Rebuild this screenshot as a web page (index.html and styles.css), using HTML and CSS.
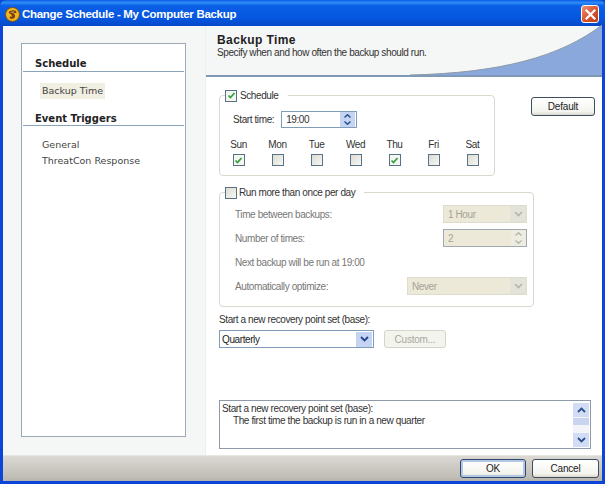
FILE: index.html
```html
<!DOCTYPE html>
<html lang="en">
<head>
<meta charset="utf-8">
<title>Change Schedule - My Computer Backup</title>
<link rel="stylesheet" href="styles.css">
</head>
<body>
<div class="window">
  <header class="titlebar">
    <svg class="app-icon" width="15" height="15" viewBox="0 0 15 15"><circle cx="7.5" cy="7.5" r="7" fill="#f2b61c" stroke="#7a4a10"/><path d="M3.5 5.5 C5 3 9 2.5 11 4 L11.5 6 L8 6 C9.5 7 10.5 8 10 10 C9 12 6 12.5 4.5 11 L5 9.5 L7.5 9.5 L6 7.5 Z" fill="#7a3f12"/><path d="M5.5 5 L9 4.6 L8.6 5.4 L6 5.6 Z" fill="#fbe08a"/></svg>
    <span class="title-text">Change Schedule - My Computer Backup</span>
    <span class="close-btn"><svg width="11" height="11" viewBox="0 0 11 11"><path d="M1.5 1.5 L9.5 9.5 M9.5 1.5 L1.5 9.5" stroke="#fff" stroke-width="2.2" stroke-linecap="square"/></svg></span>
  </header>
  <div class="body">
    <aside class="sidebar">
      <nav class="nav-panel">
        <h3 class="nav-head first">Schedule</h3>
        <div class="nav-list one"><span class="nav-item selected">Backup Time</span></div>
        <h3 class="nav-head second">Event Triggers</h3>
        <div class="nav-list"><span class="nav-item">General</span><span class="nav-item">ThreatCon Response</span></div>
      </nav>
    </aside>
    <main class="content">
      <div class="page-head">
        <svg class="swoosh" width="192" height="50" viewBox="0 0 192 50" preserveAspectRatio="none"><path d="M0 50 C90 48 150 32 192 0 L192 50 Z" fill="#8aa8dc"/><path d="M0 50 C90 48 150 32 192 0" fill="none" stroke="#8c9aa8" stroke-width="1"/></svg>
        <h1 class="page-title">Backup Time</h1>
        <p class="page-desc">Specify when and how often the backup should run.</p>
      </div>
      <div class="form">
        <div class="top-row">
          <fieldset class="group schedule">
            <legend class="legend"><span class="check on"><svg width="9" height="9" viewBox="0 0 9 9"><path d="M1.5 4.5 L3.5 6.5 L7.5 2" fill="none" stroke="#2f9e3f" stroke-width="1.7"/></svg></span>Schedule</legend>
            <div class="time-row">
              <span>Start time:</span>
              <div class="time-input"><span>19:00</span>
                <div class="spin"><span class="spin-btn"><svg width="7" height="4" viewBox="0 0 7 4"><path d="M.5 3.5 L3.5 .7 L6.5 3.5" fill="none" stroke="#28508c" stroke-width="1.4"/></svg></span><span class="spin-btn"><svg width="7" height="4" viewBox="0 0 7 4"><path d="M.5 .5 L3.5 3.3 L6.5 .5" fill="none" stroke="#28508c" stroke-width="1.4"/></svg></span></div>
              </div>
            </div>
            <div class="days">
              <div class="day"><span>Sun</span><span class="check on"><svg width="9" height="9" viewBox="0 0 9 9"><path d="M1.5 4.5 L3.5 6.5 L7.5 2" fill="none" stroke="#2f9e3f" stroke-width="1.7"/></svg></span></div>
              <div class="day"><span>Mon</span><span class="check"></span></div>
              <div class="day"><span>Tue</span><span class="check"></span></div>
              <div class="day"><span>Wed</span><span class="check"></span></div>
              <div class="day"><span>Thu</span><span class="check on"><svg width="9" height="9" viewBox="0 0 9 9"><path d="M1.5 4.5 L3.5 6.5 L7.5 2" fill="none" stroke="#2f9e3f" stroke-width="1.7"/></svg></span></div>
              <div class="day"><span>Fri</span><span class="check"></span></div>
              <div class="day"><span>Sat</span><span class="check"></span></div>
            </div>
          </fieldset>
          <button class="btn default-btn" type="button">Default</button>
        </div>
        <fieldset class="group multi">
          <legend class="legend"><span class="check"></span>Run more than once per day</legend>
          <div class="multi-row"><span>Time between backups:</span><div class="combo off w84"><span>1 Hour</span><span class="drop"><svg width="9" height="6" viewBox="0 0 9 6"><path d="M1 1 L4.5 4.5 L8 1" fill="none" stroke="#b5b5a8" stroke-width="1.6"/></svg></span></div></div>
          <div class="multi-row"><span>Number of times:</span><div class="combo off w84 framed"><span>2</span><span class="mini-spin"><svg width="7" height="4" viewBox="0 0 7 4"><path d="M.5 3.5 L3.5 .7 L6.5 3.5" fill="none" stroke="#b5b5a8" stroke-width="1.3"/></svg><svg width="7" height="4" viewBox="0 0 7 4"><path d="M.5 .5 L3.5 3.3 L6.5 .5" fill="none" stroke="#b5b5a8" stroke-width="1.3"/></svg></span></div></div>
          <div class="multi-row"><span>Next backup will be run at 19:00</span></div>
          <div class="multi-row"><span>Automatically optimize:</span><div class="combo off w120"><span>Never</span><span class="drop"><svg width="9" height="6" viewBox="0 0 9 6"><path d="M1 1 L4.5 4.5 L8 1" fill="none" stroke="#b5b5a8" stroke-width="1.6"/></svg></span></div></div>
        </fieldset>
        <div class="base-label">Start a new recovery point set (base):</div>
        <div class="base-row">
          <div class="combo base"><span>Quarterly</span><span class="drop on"><svg width="9" height="6" viewBox="0 0 9 6"><path d="M1 1 L4.5 4.5 L8 1" fill="none" stroke="#24448c" stroke-width="1.8"/></svg></span></div>
          <button class="btn custom-btn" type="button" disabled>Custom...</button>
        </div>
        <div class="info">
          <div class="info-text"><div>Start a new recovery point set (base):</div><div class="indent">The first time the backup is run in a new quarter</div></div>
          <div class="scroll">
            <span class="scroll-btn"><svg width="9" height="6" viewBox="0 0 9 6"><path d="M1 5 L4.5 1.5 L8 5" fill="none" stroke="#28508c" stroke-width="1.8"/></svg></span>
            <span class="scroll-thumb"></span>
            <span class="scroll-btn end"><svg width="9" height="6" viewBox="0 0 9 6"><path d="M1 1 L4.5 4.5 L8 1" fill="none" stroke="#28508c" stroke-width="1.8"/></svg></span>
          </div>
        </div>
      </div>
    </main>
  </div>
  <footer class="footer">
    <button class="btn ok" type="button">OK</button>
    <button class="btn cancel" type="button">Cancel</button>
  </footer>
</div>
</body>
</html>
```
FILE: styles.css
```css
* { box-sizing: border-box; }
html, body { margin: 0; padding: 0; }
body { width: 605px; height: 484px; overflow: hidden; font-family: "Liberation Sans", Arial, sans-serif; font-size: 10px; letter-spacing: -.4px; color: #333; }
.window { width: 605px; height: 484px; display: flex; flex-direction: column; background: #0c45d8; padding: 0 3px 3px; }
.titlebar { height: 26px; margin: 0 -3px; flex: none; display: flex; align-items: center; padding: 2px 6px 0 5px; background: linear-gradient(180deg, #0a5ae8 0, #2f8cf5 10%, #0a5fe6 22%, #0656e0 70%, #0648c8 100%); border-radius: 6px 6px 0 0; }
.app-icon { flex: none; }
.title-text { margin-left: 2px; color: #fff; font: bold 11.5px "Liberation Sans", sans-serif; letter-spacing: -.3px; white-space: nowrap; flex: 1; }
.close-btn { width: 18px; height: 18px; border: 1px solid #fff; border-radius: 3px; background: linear-gradient(135deg, #ec9478, #d8502c 55%, #c23c1a); display: flex; align-items: center; justify-content: center; }
.body { flex: 1; display: flex; min-height: 0; }
.sidebar { width: 203px; flex: none; background: #f5f6f6; border-right: 1px solid #eeeeea; padding: 17px 0 18px 18px; display: flex; }
.nav-panel { width: 165px; background: #fff; border: 1px solid #9aa8b8; padding-top: 13px; font-family: "DejaVu Sans", sans-serif; letter-spacing: 0; }
.nav-head { margin: 0 1px; height: 15px; line-height: 14px; padding-left: 12px; font-size: 10px; font-weight: bold; color: #222; border-bottom: 1px solid #8ba3b8; }
.nav-head.second { margin-top: 12px; line-height: 15px; }
.nav-list { display: flex; flex-direction: column; align-items: flex-start; padding: 11px 0 0 18px; gap: 1px; }
.nav-item { height: 15px; line-height: 15px; padding: 0 2px; color: #444; font-size: 9.5px; }
.nav-item.selected { background: #f1eee2; height: 16px; line-height: 16px; }
.content { flex: 1; background: #fff; display: flex; flex-direction: column; min-width: 0; }
.page-head { height: 51px; flex: none; background: #f5f6f6; border-bottom: 2px solid #7f9ab4; padding: 8px 0 0 11px; position: relative; }
.swoosh { position: absolute; right: 0; bottom: 0; }
.page-title { margin: 0; font: bold 12px "Liberation Sans", sans-serif; letter-spacing: .4px; color: #222; line-height: 13px; }
.page-desc { margin: 0; line-height: 12px; color: #333; position: relative; }
.form { flex: 1; padding: 12px 0 0 13px; display: flex; flex-direction: column; }
.top-row { display: flex; align-items: flex-start; }
.group { margin: 0; border: 1px solid #d8d8cc; border-radius: 4px; padding: 0; min-width: 0; }
.legend { display: flex; align-items: center; gap: 3px; padding: 0 9px 0 0; margin-left: 5px; height: 13px; color: #333; }
.check { width: 12px; height: 12px; flex: none; border: 1px solid #5a7286; background: linear-gradient(135deg, #dcdcd4, #f8f8f4); display: inline-flex; align-items: center; justify-content: center; }
.check.on { background: #f4f7f0; }
.schedule { width: 276px; height: 87px; }
.default-btn { margin: 8px 0 0 36px; width: 64px; height: 19px; }
.time-row { display: flex; align-items: center; gap: 7px; padding: 9px 0 0 13px; }
.time-input { width: 76px; height: 17px; border: 1px solid #7f9db9; display: flex; align-items: center; justify-content: space-between; padding: 0 1px 0 4px; }
.spin { display: flex; flex-direction: column; height: 15px; width: 15px; }
.spin-btn { flex: 1; background: #c4d4f2; display: flex; align-items: center; justify-content: center; }
.days { display: grid; grid-template-columns: repeat(7, 39px); margin: 11px 0 0 -1px; }
.day { display: flex; flex-direction: column; align-items: center; gap: 3px; line-height: 12px; }
.multi { width: 315px; height: 121px; margin-top: 10px; padding: 3px 6px 0 15px; color: #777; }
.multi .legend { margin-left: -10px; gap: 2px; }
.multi-row { height: 24px; display: flex; align-items: center; justify-content: space-between; }
.combo { height: 18px; display: flex; align-items: center; justify-content: space-between; padding-left: 4px; }
.combo.off { background: #ece9d8; color: #a5a296; border: 1px solid #dedccd; }
.combo.framed { border-color: #a0a8b0; padding-right: 0; }
.w84 { width: 84px; }
.w120 { width: 120px; }
.drop { width: 16px; height: 100%; display: flex; align-items: center; justify-content: center; background: #e4e3da; }
.drop.on { background: #c4d4f2; }
.mini-spin { width: 15px; height: 100%; display: flex; flex-direction: column; align-items: center; justify-content: space-around; background: #eeece0; }
.base-label { margin-top: 6px; line-height: 13px; }
.base-row { display: flex; gap: 10px; margin-top: 4px; }
.combo.base { width: 155px; height: 18px; border: 1px solid #7f9db9; color: #222; padding: 0 1px 0 2px; }
.combo.base .drop { height: 15px; }
.custom-btn { width: 62px; height: 18px; }
.info { margin-top: 52px; width: 372px; height: 49px; border: 1px solid #8e9aa8; display: flex; justify-content: space-between; padding: 2px 1px 1px 2px; }
.info-text { line-height: 11.5px; color: #333; }
.indent { padding-left: 11px; }
.scroll { width: 16px; display: flex; flex-direction: column; background: #f2f4fa; }
.scroll-btn { height: 14px; background: #d2dcf4; display: flex; align-items: center; justify-content: center; }
.scroll-thumb { height: 7px; margin-top: 1px; background: #c8d4f0; }
.scroll-btn.end { margin-top: auto; }
.footer { height: 26px; flex: none; background: linear-gradient(180deg, #dcd9d4, #c0bcb6 85%, #b6b2ac); border-top: 1px solid #e8e6e2; display: flex; justify-content: flex-end; align-items: center; gap: 6px; padding-right: 3px; }
.btn { font: 10px "Liberation Sans", Arial, sans-serif; letter-spacing: -.2px; color: #222; border: 1px solid #3c4e60; border-radius: 3px; background: linear-gradient(180deg, #fff, #f4f4ee 80%, #dcd8cc); padding: 0; }
.btn:disabled { border-color: #d4d4c8; background: #f4f4ee; color: #a8a89c; }
.ok { width: 66px; height: 19px; border-color: #2c4870; box-shadow: inset 0 0 0 2px #b4c8e4; }
.cancel { width: 67px; height: 19px; }
```
